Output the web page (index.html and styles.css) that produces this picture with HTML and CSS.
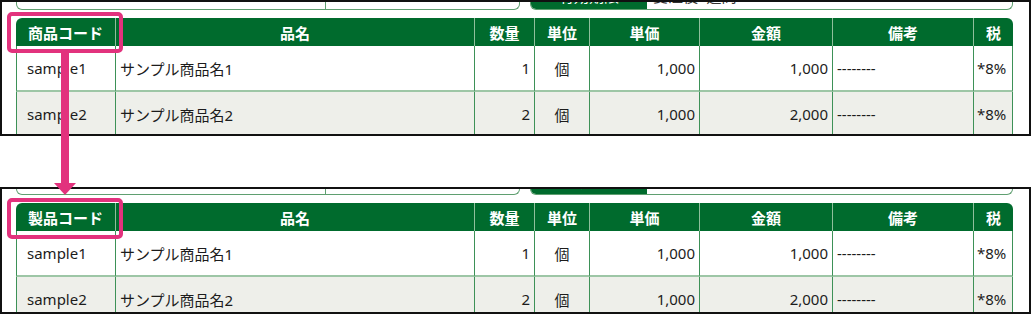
FILE: index.html
```html
<!DOCTYPE html>
<html lang="ja">
<head>
<meta charset="utf-8">
<title>商品コード → 製品コード</title>
<link rel="stylesheet" href="styles.css">
</head>
<body>
<div class="stage">
  <div class="shot shot-a">
    <div class="page">
      <div class="info">
        <div class="info-box info-left"><div class="cell c1"></div><div class="cell c2"></div></div>
        <div class="info-box info-right"><div class="label">有効期限</div><div class="value">受注後2週間</div></div>
      </div>
      <table class="items">
        <colgroup><col class="w1"><col class="w2"><col class="w3"><col class="w4"><col class="w5"><col class="w6"><col class="w7"><col class="w8"></colgroup>
        <thead><tr><th>商品コード</th><th>品名</th><th>数量</th><th>単位</th><th>単価</th><th>金額</th><th>備考</th><th>税</th></tr></thead>
        <tbody>
          <tr><td class="code">sample1</td><td class="name">サンプル商品名1</td><td class="num">1</td><td class="unit">個</td><td class="num">1,000</td><td class="num">1,000</td><td class="note">--------</td><td class="tax">*8%</td></tr>
          <tr class="alt"><td class="code">sample2</td><td class="name">サンプル商品名2</td><td class="num">2</td><td class="unit">個</td><td class="num">1,000</td><td class="num">2,000</td><td class="note">--------</td><td class="tax">*8%</td></tr>
        </tbody>
      </table>
    </div>
  </div>
  <div class="shot shot-b">
    <div class="page">
      <div class="info">
        <div class="info-box info-left"><div class="cell c1"></div><div class="cell c2"></div></div>
        <div class="info-box info-right"><div class="label">有効期限</div><div class="value">受注後2週間</div></div>
      </div>
      <table class="items">
        <colgroup><col class="w1"><col class="w2"><col class="w3"><col class="w4"><col class="w5"><col class="w6"><col class="w7"><col class="w8"></colgroup>
        <thead><tr><th>製品コード</th><th>品名</th><th>数量</th><th>単位</th><th>単価</th><th>金額</th><th>備考</th><th>税</th></tr></thead>
        <tbody>
          <tr><td class="code">sample1</td><td class="name">サンプル商品名1</td><td class="num">1</td><td class="unit">個</td><td class="num">1,000</td><td class="num">1,000</td><td class="note">--------</td><td class="tax">*8%</td></tr>
          <tr class="alt"><td class="code">sample2</td><td class="name">サンプル商品名2</td><td class="num">2</td><td class="unit">個</td><td class="num">1,000</td><td class="num">2,000</td><td class="note">--------</td><td class="tax">*8%</td></tr>
        </tbody>
      </table>
    </div>
  </div>
  <div class="mark mark-a"></div>
  <div class="mark mark-b"></div>
  <div class="arrow-shaft"></div>
  <div class="arrow-head"></div>
</div>
</body>
</html>
```

FILE: styles.css
```css
body {
  margin: 0;
  background: #fff;
  font-family: "Noto Sans", "Noto Sans CJK JP", sans-serif;
  color: #1c1c1c;
}
.stage {
  position: relative;
  width: 1031px;
  height: 314px;
}
.shot {
  border: 2px solid #111;
  overflow: hidden;
  box-sizing: border-box;
  background: #fff;
}
.shot-a { height: 136px; }
.shot-b { height: 127px; margin-top: 51px; }
.page { padding: 0 16px 0 14px; }
.shot-a .page { margin-top: -18px; }
.shot-b .page { margin-top: -20px; }

.info {
  display: flex;
  gap: 10px;
  height: 26px;
  margin-bottom: 8px;
}
.info-box {
  display: flex;
  box-sizing: border-box;
  height: 26px;
  border: 1.5px solid #5f9f70;
  border-top: none;
  border-radius: 0 0 6px 6px;
  overflow: hidden;
  font-size: 15px;
  line-height: 24px;
}
.info-left { width: 504px; }
.info-right { flex: 1; }
.info-left .c1 { width: 308px; border-right: 1.5px solid #5f9f70; }
.info-right .label {
  width: 116px;
  background: #006b2d;
  color: #fff;
  text-align: center;
}
.info-right .value { padding-left: 6px; color: #333; }

.items {
  border-spacing: 0;
  width: 997px;
  table-layout: fixed;
  font-size: 15px;
}
.w1 { width: 99px; }
.w2 { width: 359px; }
.w3 { width: 60px; }
.w4 { width: 55px; }
.w5 { width: 110px; }
.w6 { width: 133px; }
.w7 { width: 141px; }
.w8 { width: 40px; }
.items th {
  background: #006b2d;
  color: #fff;
  height: 28px;
  padding: 0;
  font-weight: 700;
  text-align: center;
  border-left: 1px solid #8fbf9b;
  box-sizing: border-box;
}
.items th:first-child { border-left: none; border-top-left-radius: 6px; }
.items th:last-child { border-top-right-radius: 6px; }
.items td {
  height: 46px;
  box-sizing: border-box;
  padding: 0 4px;
  border-left: 1px solid #3d9157;
  border-bottom: 2px solid #9dc6a6;
  white-space: nowrap;
}
.items td:last-child { border-right: 1px solid #3d9157; }
.items tr.alt td { background: #eeefea; }
.items td.code { padding-left: 10px; }
.items td.num { text-align: right; }
.items td.unit { text-align: center; }
.items td.tax { padding-left: 3px; }

.mark {
  position: absolute;
  left: 7px;
  width: 116px;
  height: 41px;
  box-sizing: border-box;
  border: 4px solid #e2327d;
  border-radius: 5px;
}
.mark-a { top: 12px; }
.mark-b { top: 198px; }
.arrow-shaft {
  position: absolute;
  left: 61px;
  top: 53px;
  width: 8px;
  height: 131px;
  background: #e2327d;
}
.arrow-head {
  position: absolute;
  left: 54px;
  top: 183px;
  width: 0;
  height: 0;
  border-left: 11px solid transparent;
  border-right: 11px solid transparent;
  border-top: 12px solid #e2327d;
}
```
